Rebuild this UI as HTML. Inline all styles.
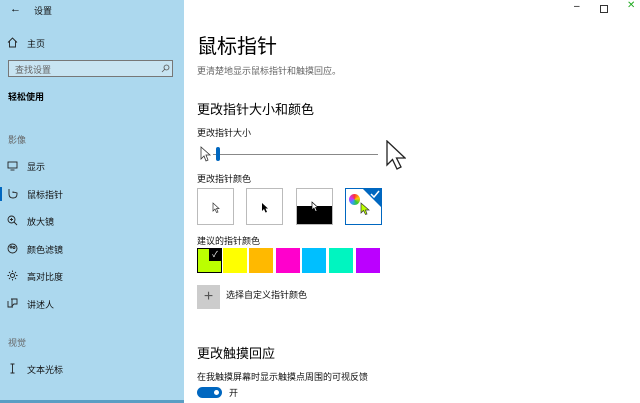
<!DOCTYPE html><html><head><meta charset="utf-8"><style>
body{margin:0;width:640px;height:403px;overflow:hidden;font-family:"Liberation Sans","Noto Sans CJK SC",sans-serif;background:#fff;position:relative;color:#000}
.a{position:absolute;white-space:nowrap}
#side{position:absolute;left:0;top:0;width:184px;height:403px;background:#acd8ee;border-bottom:3px solid #5a9ec4;box-sizing:border-box}
.n{font-size:9px;color:#111}
.g{font-size:9px;color:#666}
.box{position:absolute;top:188px;width:35px;height:35px;border:1px solid #bbb;background:#fff}
.sw{position:absolute;top:248px;width:24px;height:25px}
svg.i{position:absolute;left:7px;width:11px;height:11px}
svg.i *{fill:none;stroke:#222;stroke-width:0.9}
</style></head><body>
<div id="side">
<div class="a" style="left:10px;top:3px;font-size:11px">←</div>
<div class="a n" style="left:34px;top:4px">设置</div>
<svg class="i" style="top:37px" viewBox="0 0 11 11"><path d="M1 5.5L5.5 1L10 5.5M2.5 4V10H8.5V4"/></svg>
<div class="a n" style="left:27px;top:37px">主页</div>
<div class="a" style="left:8px;top:60px;width:165px;height:17px;border:1px solid #777;background:#c8e4f2;box-sizing:border-box"></div>
<div class="a g" style="left:15px;top:63px">查找设置</div>
<svg class="a" style="left:161px;top:64px" width="9" height="9" viewBox="0 0 9 9"><circle cx="5.5" cy="3.5" r="2.5" fill="none" stroke="#555" stroke-width="0.8"/><path d="M4 5L1 8" stroke="#555" stroke-width="0.8"/></svg>
<div class="a" style="left:8px;top:90px;font-size:9px;font-weight:bold">轻松使用</div>
<div class="a g" style="left:8px;top:133px">影像</div>
<svg class="i" style="top:160px" viewBox="0 0 11 11"><rect x="1" y="2" width="9" height="6"/><path d="M3.5 10H7.5"/></svg><div class="a n" style="left:27px;top:160px">显示</div>
<div class="a" style="left:0;top:187px;width:2px;height:14px;background:#0067c0"></div>
<svg class="i" style="top:188px" viewBox="0 0 11 11"><path d="M2 1V6M2 6C2 9 4 10 6 10C8 10 10 9 10 6V5L6 4V5"/></svg><div class="a n" style="left:27px;top:188px">鼠标指针</div>
<svg class="i" style="top:215px" viewBox="0 0 11 11"><circle cx="4.5" cy="4.5" r="3.5"/><path d="M7 7L10 10M3 4.5H6M4.5 3V6"/></svg><div class="a n" style="left:27px;top:215px">放大镜</div>
<svg class="i" style="top:243px" viewBox="0 0 11 11"><circle cx="5.5" cy="5.5" r="4.5"/><circle cx="4" cy="4" r="1"/><circle cx="7" cy="4.5" r="1"/></svg><div class="a n" style="left:27px;top:243px">颜色滤镜</div>
<svg class="i" style="top:270px" viewBox="0 0 11 11"><circle cx="5.5" cy="5.5" r="2"/><path d="M5.5 0.5V2M5.5 9V10.5M0.5 5.5H2M9 5.5H10.5M2 2L3 3M8 8L9 9M9 2L8 3M2 9L3 8"/></svg><div class="a n" style="left:27px;top:270px">高对比度</div>
<svg class="i" style="top:298px" viewBox="0 0 11 11"><path d="M1 3V9H6M4 1H10V6H7L5 8V1"/></svg><div class="a n" style="left:27px;top:298px">讲述人</div>
<div class="a g" style="left:8px;top:336px">视觉</div>
<svg class="i" style="top:363px" viewBox="0 0 11 11"><path d="M3.5 1H7.5M5.5 1V10M3.5 10H7.5"/></svg><div class="a n" style="left:27px;top:363px">文本光标</div>
</div>
<div class="a" style="left:574px;top:1px;font-size:10px">–</div>
<div class="a" style="left:600px;top:5px;width:6px;height:6px;border:1px solid #333"></div>
<div class="a" style="left:627px;top:0px;font-size:10px;color:#2a2">✕</div>
<div class="a" style="left:197px;top:30px;font-size:20px">鼠标指针</div>
<div class="a g" style="left:197px;top:64px">更清楚地显示鼠标指针和触摸回应。</div>
<div class="a" style="left:197px;top:99px;font-size:13px">更改指针大小和颜色</div>
<div class="a n" style="left:197px;top:126px">更改指针大小</div>
<svg class="a" style="left:200px;top:146px" width="12" height="16"><path d="M1 1V13L4 10L6 15L8 14L6 9H10Z" fill="#fff" stroke="#333" stroke-width="0.8"/></svg>
<div class="a" style="left:213px;top:154px;width:165px;height:1px;background:#888"></div>
<div class="a" style="left:216px;top:147px;width:4px;height:14px;border-radius:2px;background:#0067c0"></div>
<svg class="a" style="left:386px;top:140px" width="20" height="31"><path d="M1 1V25L6.5 19.5L11 29L15 27L10.5 18H19Z" fill="#fff" stroke="#222" stroke-width="1.3"/></svg>
<div class="a n" style="left:197px;top:172px">更改指针颜色</div>
<div class="box" style="left:197px"><svg style="position:absolute;left:14px;top:13px" width="8" height="12"><path d="M1 1V9L3 7L4.5 10.5L6 10L4.5 6.5H7Z" fill="#fff" stroke="#333" stroke-width="0.7"/></svg></div>
<div class="box" style="left:246px"><svg style="position:absolute;left:14px;top:13px" width="8" height="12"><path d="M1 1V9L3 7L4.5 10.5L6 10L4.5 6.5H7Z" fill="#000"/></svg></div>
<div class="box" style="left:296px"><div style="position:absolute;left:0;top:17px;width:35px;height:18px;background:#000"></div><svg style="position:absolute;left:14px;top:12px" width="8" height="12"><path d="M1 1V9L3 7L4.5 10.5L6 10L4.5 6.5H7Z" fill="#fff" stroke="#000" stroke-width="0.7"/></svg></div>
<div class="box" style="left:345px;border:1px solid #0067c0;width:35px"><svg style="position:absolute;right:0;top:0" width="18" height="18"><path d="M0 0H18V18Z" fill="#0067c0"/><path d="M8 5L11 8L16 2" stroke="#fff" stroke-width="1.5" fill="none"/></svg><div style="position:absolute;left:3px;top:5px;width:11px;height:11px;border-radius:50%;background:conic-gradient(#f33,#fc0,#3c3,#39f,#c3f,#f33)"></div><svg style="position:absolute;left:14px;top:13px" width="10" height="14"><path d="M1 1V11L3.5 8.5L5.5 12.5L7 12L5.5 8H9Z" fill="#bf0" stroke="#333" stroke-width="0.7"/></svg></div>
<div class="a n" style="left:197px;top:234px">建议的指针颜色</div>
<div class="sw" style="left:197px;background:#bf0;box-sizing:border-box;border:1px solid #000;width:25px"><div style="position:absolute;right:0;top:0;width:12px;height:12px;background:#000;color:#fff;font-size:8px;text-align:center;line-height:12px">✓</div></div>
<div class="sw" style="left:223px;background:#ff0"></div>
<div class="sw" style="left:249px;background:#ffb900"></div>
<div class="sw" style="left:276px;background:#f0c"></div>
<div class="sw" style="left:302px;background:#00bfff"></div>
<div class="sw" style="left:329px;background:#00f5c0"></div>
<div class="sw" style="left:356px;background:#b0f"></div>
<div class="a" style="left:197px;top:285px;width:23px;height:24px;background:#ccc;color:#555;font-size:16px;text-align:center;line-height:24px">+</div>
<div class="a n" style="left:226px;top:288px">选择自定义指针颜色</div>
<div class="a" style="left:197px;top:343px;font-size:13px">更改触摸回应</div>
<div class="a n" style="left:197px;top:370px">在我触摸屏幕时显示触摸点周围的可视反馈</div>
<div class="a" style="left:197px;top:387px;width:25px;height:11px;border-radius:6px;background:#0067c0"><div style="position:absolute;right:3px;top:3px;width:5px;height:5px;border-radius:50%;background:#fff"></div></div>
<div class="a n" style="left:229px;top:386px">开</div>
</body></html>
